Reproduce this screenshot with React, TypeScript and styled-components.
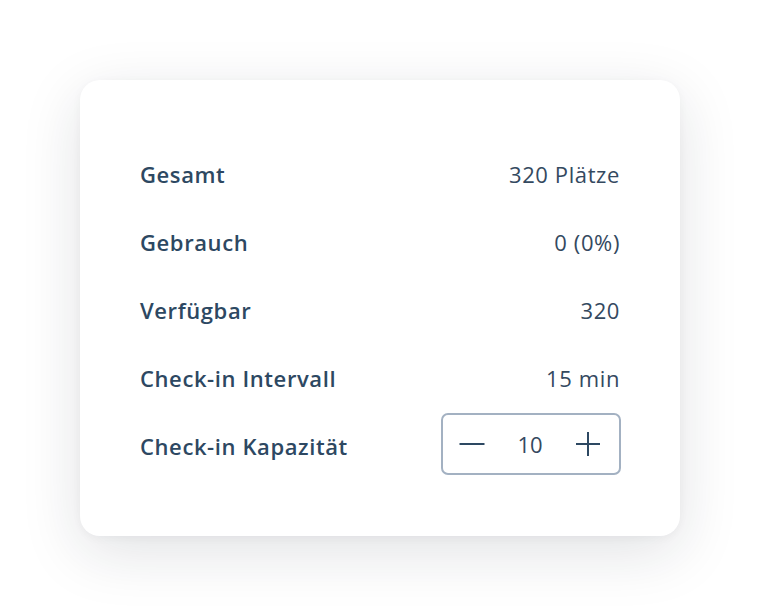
import React, { useState } from "react";
import styled, { createGlobalStyle } from "styled-components";

const Global = createGlobalStyle`
  html, body { margin: 0; padding: 0; background: #ffffff; }
  body { font-family: "Open Sans", "Noto Sans", sans-serif; }
`;

const Page = styled.div`
  width: 760px;
  height: 616px;
  padding: 80px;
  box-sizing: border-box;
`;

const Card = styled.div`
  width: 600px;
  height: 456px;
  box-sizing: border-box;
  background: #ffffff;
  border-radius: 20px;
  box-shadow: 0 16px 60px rgba(20, 30, 50, 0.13), 0 2px 10px rgba(20, 30, 50, 0.04);
  padding: 60px 60px 56px;
  display: flex;
  flex-direction: column;
`;

const Row = styled.div`
  height: 68px;
  display: flex;
  align-items: center;
  justify-content: space-between;
`;

const Label = styled.span`
  font-size: 22px;
  font-weight: 600;
  color: #2d4862;
  letter-spacing: 0.6px;
`;

const Value = styled.span`
  font-size: 22px;
  font-weight: 400;
  color: #34495f;
  letter-spacing: 0.6px;
`;

const Stepper = styled.div`
  width: 180px;
  height: 62px;
  box-sizing: border-box;
  border: 2px solid #a3b1c2;
  border-radius: 7px;
  display: flex;
  align-items: center;
  justify-content: space-between;
  padding: 0 8px 0 6px;
  margin-top: -4px;
  margin-right: -1px;
`;

const StepButton = styled.button`
  width: 46px;
  height: 46px;
  border: none;
  background: transparent;
  padding: 0;
  display: flex;
  align-items: center;
  justify-content: center;
  cursor: pointer;
  color: #2d4862;
`;

const Count = styled.span`
  font-size: 22px;
  color: #34495f;
`;

const Minus = () => (
  <svg width="26" height="26" viewBox="0 0 26 26">
    <line x1="0.5" y1="13" x2="25.5" y2="13" stroke="currentColor" strokeWidth="2" />
  </svg>
);

const Plus = () => (
  <svg width="26" height="26" viewBox="0 0 26 26">
    <line x1="1" y1="13" x2="25" y2="13" stroke="currentColor" strokeWidth="2" />
    <line x1="13" y1="1" x2="13" y2="25" stroke="currentColor" strokeWidth="2" />
  </svg>
);

export default function App() {
  const [cap, setCap] = useState(10);
  return (
    <>
      <Global />
      <Page>
        <Card>
          <Row>
            <Label>Gesamt</Label>
            <Value>320 Plätze</Value>
          </Row>
          <Row>
            <Label>Gebrauch</Label>
            <Value>0 (0%)</Value>
          </Row>
          <Row>
            <Label>Verfügbar</Label>
            <Value>320</Value>
          </Row>
          <Row>
            <Label>Check-in Intervall</Label>
            <Value>15 min</Value>
          </Row>
          <Row>
            <Label>Check-in Kapazität</Label>
            <Stepper>
              <StepButton aria-label="minus" onClick={() => setCap((c) => Math.max(0, c - 1))}>
                <Minus />
              </StepButton>
              <Count>{cap}</Count>
              <StepButton aria-label="plus" onClick={() => setCap((c) => c + 1)}>
                <Plus />
              </StepButton>
            </Stepper>
          </Row>
        </Card>
      </Page>
    </>
  );
}
